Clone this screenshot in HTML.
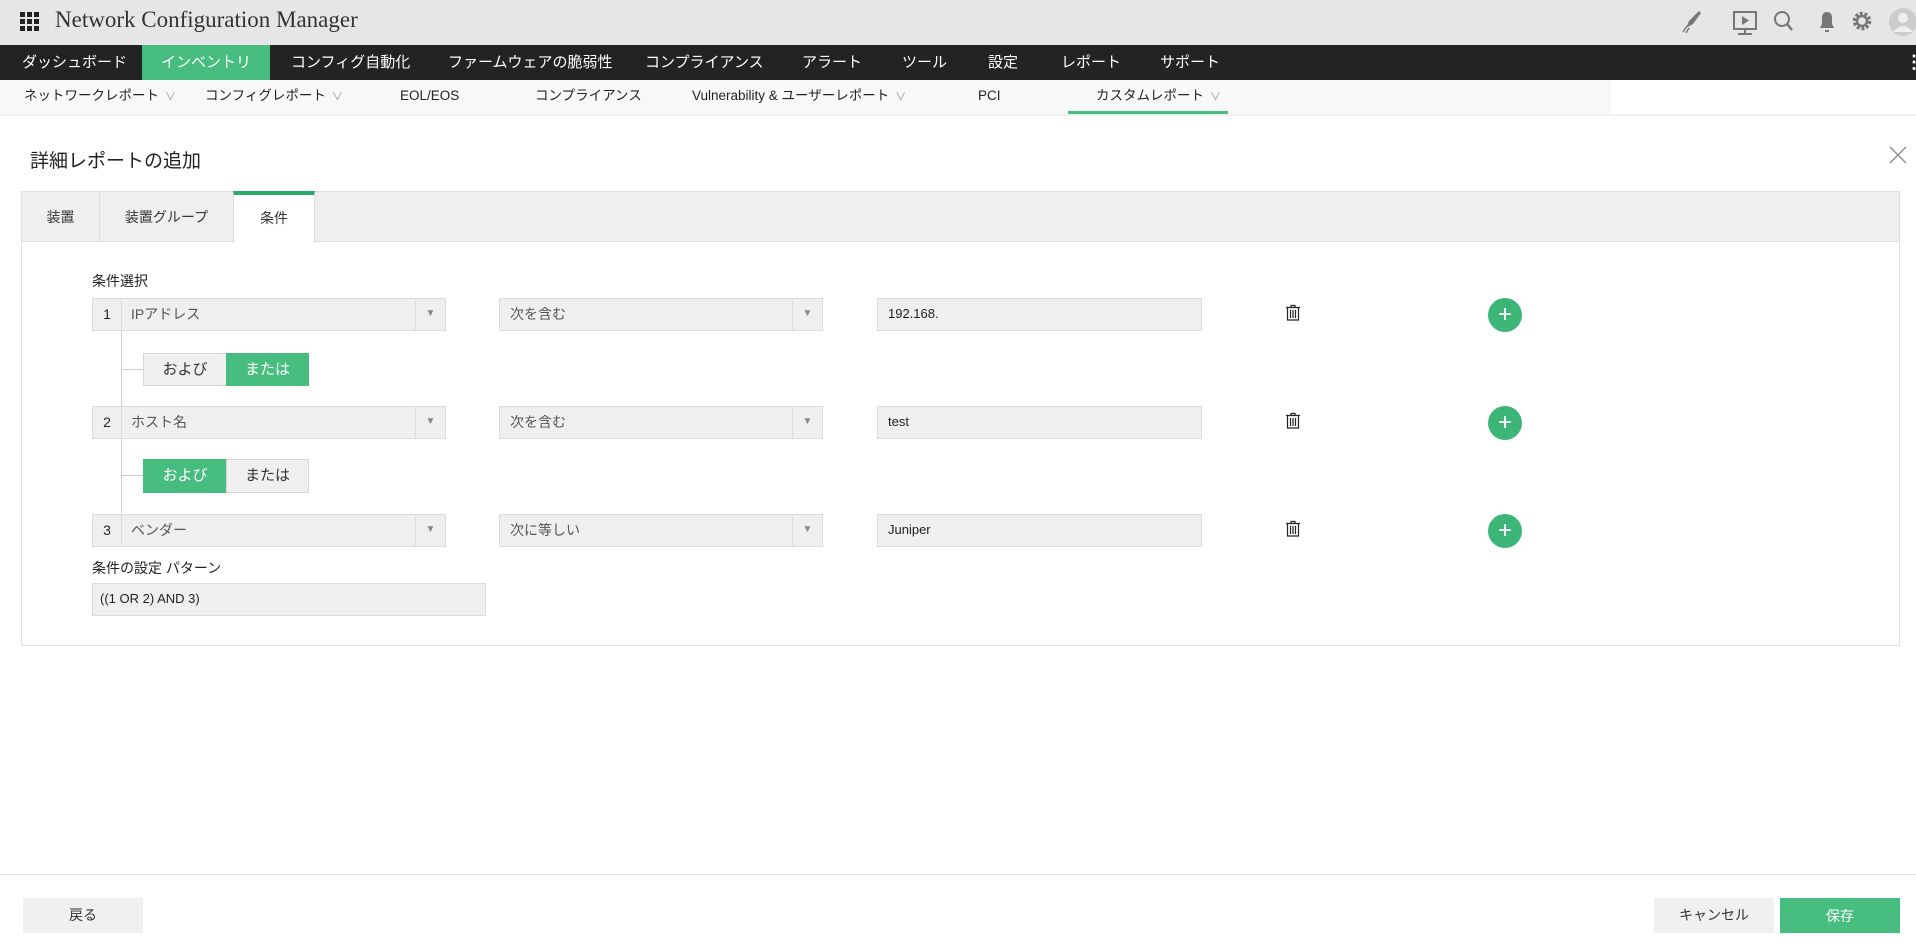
<!DOCTYPE html>
<html><head><meta charset="utf-8"><style>
*{box-sizing:border-box;margin:0;padding:0}
body{width:1916px;height:945px;position:relative;overflow:hidden;background:#fff;font-family:"Liberation Sans","Noto Sans CJK JP",sans-serif;color:#333}
.a{position:absolute}
.hdr{left:0;top:0;width:1916px;height:45px;background:#e6e6e6}
.nav{left:0;top:45px;width:1916px;height:35px;background:#232323}
.nav span{position:absolute;top:0;height:35px;line-height:35px;color:#fff;font-size:15px}
.sub{left:0;top:80px;width:1611px;height:34px;background:#f8f8f8}
.sub span{position:absolute;top:0;line-height:32px;font-size:13.5px;color:#222}
.sub i{font-style:normal;color:#999;font-size:11px;margin-left:6px}
.box{background:#efefef;border:1px solid #dcdcdc;font-size:14px;color:#555;line-height:30px;padding-left:10px}
.btn{border:1px solid #d6d6d6;background:#efefef;text-align:center;font-size:15px;line-height:31px;color:#333}
.g{background:#47bd80;color:#fff;border-color:#47bd80}
.plus{width:34px;height:34px;border-radius:50%;background:#3db577;color:#fff;text-align:center;line-height:33px;font-size:24px}
.arr{border-left:1px solid #dcdcdc;width:30px;text-align:center;color:#888;font-size:10px}
</style></head><body>
<div class="a hdr"></div>
<svg class="a" style="left:20px;top:12px" width="20" height="20"><g fill="#222"><rect x="0" y="0" width="5" height="5"/><rect x="7" y="0" width="5" height="5"/><rect x="14" y="0" width="5" height="5"/><rect x="0" y="7" width="5" height="5"/><rect x="7" y="7" width="5" height="5"/><rect x="14" y="7" width="5" height="5"/><rect x="0" y="14" width="5" height="5"/><rect x="7" y="14" width="5" height="5"/><rect x="14" y="14" width="5" height="5"/></g></svg>
<div class="a" style="left:55px;top:7px;font-family:'Liberation Serif',serif;font-size:23px;color:#333">Network Configuration Manager</div>
<svg class="a" style="left:1680px;top:8px" width="236" height="30" fill="#777" stroke="#777">
<path d="M6 20 L9 13 L19 3 L21 5 L13 16 Z" stroke="none"/><path d="M3 24 L7 18 M6 25 L9 20" stroke-width="1.5"/>
<rect x="54" y="4" width="22" height="17" fill="none" stroke-width="2"/><path d="M62 8 L69 12.5 L62 17Z" stroke="none"/><path d="M65 21v5M58 26h14" stroke-width="2"/>
<circle cx="102" cy="11" r="7" fill="none" stroke-width="2"/><path d="M107 16 L112 22" stroke-width="2.5"/>
<path d="M140 20 L142 16 L142 10 Q142 4 147 4 Q152 4 152 10 L152 16 L154 20Z M145 22 h4 v2 h-4z" stroke="none"/>
<circle cx="182" cy="13" r="7.5" fill="none" stroke-width="3.5" stroke-dasharray="2.9 1.8"/><circle cx="182" cy="13" r="5" fill="none" stroke-width="2.5"/>
<circle cx="223" cy="14" r="14" fill="#ccc" stroke="none"/><circle cx="223" cy="10" r="5" fill="#eee" stroke="none"/><path d="M213 24 Q223 12 233 24Z" fill="#eee" stroke="none"/>
</svg>
<div class="a nav">
<span style="left:22px">ダッシュボード</span>
<span style="left:142px;width:128px;background:#47bd80;text-align:center">インベントリ</span>
<span style="left:291px">コンフィグ自動化</span>
<span style="left:448px">ファームウェアの脆弱性</span>
<span style="left:645px">コンプライアンス</span>
<span style="left:802px">アラート</span>
<span style="left:902px">ツール</span>
<span style="left:988px">設定</span>
<span style="left:1061px">レポート</span>
<span style="left:1160px">サポート</span>
<span style="left:1905px;font-weight:bold;font-size:18px">⋮</span>
</div>
<div class="a sub">
<span style="left:24px">ネットワークレポート<i>∨</i></span>
<span style="left:205px">コンフィグレポート<i>∨</i></span>
<span style="left:400px">EOL/EOS</span>
<span style="left:535px">コンプライアンス</span>
<span style="left:692px">Vulnerability &amp; ユーザーレポート<i>∨</i></span>
<span style="left:978px">PCI</span>
<span style="left:1096px">カスタムレポート<i>∨</i></span>
<div class="a" style="left:1068px;top:31px;width:160px;height:3px;background:#47bd80"></div>
</div>
<div class="a" style="left:1611px;top:80px;width:305px;height:34px;background:#fff"></div>
<div class="a" style="left:0;top:114px;width:1916px;height:2px;background:#f0f0f0"></div>
<div class="a" style="left:30px;top:146px;font-size:19px;color:#222">詳細レポートの追加</div>
<svg class="a" style="left:1889px;top:146px" width="18" height="18" stroke="#888" stroke-width="1.3"><path d="M1 1L17 17M17 1L1 17"/></svg>
<div class="a" style="left:21px;top:191px;width:1879px;height:455px;border:1px solid #e0e0e0"></div>
<div class="a" style="left:22px;top:192px;width:1877px;height:50px;background:#efefef;border-bottom:1px solid #ddd"></div>
<div class="a" style="left:99px;top:192px;width:1px;height:50px;background:#ddd"></div>
<div class="a" style="left:22px;top:192px;width:77px;line-height:50px;text-align:center;font-size:14px">装置</div>
<div class="a" style="left:100px;top:192px;width:133px;line-height:50px;text-align:center;font-size:14px">装置グループ</div>
<div class="a" style="left:233px;top:191px;width:82px;height:52px;background:#fff;border-top:4px solid #27aa6a;border-left:1px solid #ddd;border-right:1px solid #ddd;text-align:center;line-height:46px;font-size:14px">条件</div>
<div class="a" style="left:92px;top:271px;font-size:14px;color:#222">条件選択</div>
<div class="a" style="left:121px;top:330px;width:1px;height:183px;background:#ccc"></div>
<div class="a" style="left:121px;top:369px;width:22px;height:1px;background:#ccc"></div>
<div class="a" style="left:121px;top:475px;width:22px;height:1px;background:#ccc"></div>

<div class="a box" style="left:92px;top:298px;width:354px;height:33px;padding:0"><span style="position:absolute;left:0;width:29px;text-align:center;color:#222;border-right:1px solid #dcdcdc">1</span><span style="position:absolute;left:38px">IPアドレス</span><span class="a arr" style="right:0;top:0;height:31px">▼</span></div>
<div class="a box" style="left:499px;top:298px;width:324px;height:33px">次を含む<span class="a arr" style="right:0;top:0;height:31px">▼</span></div>
<div class="a box" style="left:877px;top:298px;width:325px;height:33px;color:#222;font-size:13px">192.168.</div>
<div class="a btn" style="left:143px;top:353px;width:84px;height:33px">および</div>
<div class="a btn g" style="left:226px;top:353px;width:83px;height:33px">または</div>

<div class="a box" style="left:92px;top:406px;width:354px;height:33px;padding:0"><span style="position:absolute;left:0;width:29px;text-align:center;color:#222;border-right:1px solid #dcdcdc">2</span><span style="position:absolute;left:38px">ホスト名</span><span class="a arr" style="right:0;top:0;height:31px">▼</span></div>
<div class="a box" style="left:499px;top:406px;width:324px;height:33px">次を含む<span class="a arr" style="right:0;top:0;height:31px">▼</span></div>
<div class="a box" style="left:877px;top:406px;width:325px;height:33px;color:#222;font-size:13px">test</div>
<div class="a btn g" style="left:143px;top:459px;width:84px;height:34px">および</div>
<div class="a btn" style="left:226px;top:459px;width:83px;height:34px">または</div>

<div class="a box" style="left:92px;top:514px;width:354px;height:33px;padding:0"><span style="position:absolute;left:0;width:29px;text-align:center;color:#222;border-right:1px solid #dcdcdc">3</span><span style="position:absolute;left:38px">ベンダー</span><span class="a arr" style="right:0;top:0;height:31px">▼</span></div>
<div class="a box" style="left:499px;top:514px;width:324px;height:33px">次に等しい<span class="a arr" style="right:0;top:0;height:31px">▼</span></div>
<div class="a box" style="left:877px;top:514px;width:325px;height:33px;color:#222;font-size:13px">Juniper</div>

<svg class="a" style="left:1285px;top:304px" width="16" height="18" fill="none" stroke="#222" stroke-width="1.2"><path d="M1 3.5h14M6 3.5V1.5h4v2M2.5 3.5v12.5h11V3.5M5.5 6v8M8 6v8M10.5 6v8"/></svg>
<svg class="a" style="left:1285px;top:412px" width="16" height="18" fill="none" stroke="#222" stroke-width="1.2"><path d="M1 3.5h14M6 3.5V1.5h4v2M2.5 3.5v12.5h11V3.5M5.5 6v8M8 6v8M10.5 6v8"/></svg>
<svg class="a" style="left:1285px;top:520px" width="16" height="18" fill="none" stroke="#222" stroke-width="1.2"><path d="M1 3.5h14M6 3.5V1.5h4v2M2.5 3.5v12.5h11V3.5M5.5 6v8M8 6v8M10.5 6v8"/></svg>
<div class="a plus" style="left:1488px;top:298px">+</div>
<div class="a plus" style="left:1488px;top:406px">+</div>
<div class="a plus" style="left:1488px;top:514px">+</div>

<div class="a" style="left:92px;top:558px;font-size:14px;color:#222">条件の設定 パターン</div>
<div class="a box" style="left:92px;top:583px;width:394px;height:33px;color:#222;font-size:13px;padding-left:7px">((1 OR 2) AND 3)</div>

<div class="a" style="left:0;top:874px;width:1916px;height:1px;background:#e2e2e2"></div>
<div class="a btn" style="left:23px;top:898px;width:120px;height:35px;border:none;background:#f0f0f0;font-size:14px;line-height:35px">戻る</div>
<div class="a btn" style="left:1654px;top:898px;width:120px;height:35px;border:none;background:#f0f0f0;font-size:14px;line-height:35px">キャンセル</div>
<div class="a btn g" style="left:1780px;top:898px;width:120px;height:35px;font-size:14px;line-height:35px">保存</div>
</body></html>
